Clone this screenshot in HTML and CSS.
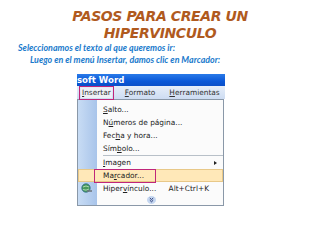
FILE: index.html
```html
<!DOCTYPE html>
<html>
<head>
<meta charset="utf-8">
<link rel="stylesheet" href="styles.css">
</head>
<body>
<h1 class="title">PASOS PARA CREAR UN<br>HIPERVINCULO</h1>
<p class="step step1">Seleccionamos el texto al que queremos ir:</p>
<p class="step step2">Luego en el menú Insertar, damos clic en Marcador:</p>
<div class="shot">
  <div class="titlebar">soft Word</div>
  <div class="menubar">
    <span class="mitem active"><u>I</u>nsertar</span>
    <span class="mitem"><u>F</u>ormato</span>
    <span class="mitem"><u>H</u>erramientas</span>
  </div>
  <div class="dropdown">
    <div class="row"><span class="label"><u>S</u>alto...</span></div>
    <div class="row"><span class="label">N<u>ú</u>meros de página...</span></div>
    <div class="row"><span class="label">Fec<u>h</u>a y hora...</span></div>
    <div class="row"><span class="label">Sím<u>b</u>olo...</span></div>
    <div class="sep"></div>
    <div class="row"><span class="label"><u>I</u>magen</span><span class="arrow"></span></div>
    <div class="row hl"><span class="label boxed">Ma<u>r</u>cador...</span></div>
    <div class="row">
      <span class="icon"><svg width="12" height="11" viewBox="0 0 12 11"><circle cx="5" cy="5" r="4.2" fill="#4a9a5a" stroke="#2c6a8a" stroke-width="0.8"/><path d="M2 4 Q5 2 8 4 M2 6.5 Q5 8 8 6" stroke="#bfe6c8" stroke-width="0.8" fill="none"/><path d="M6 8 h5" stroke="#707880" stroke-width="1.6"/></svg></span>
      <span class="label">Hiper<u>v</u>ínculo...</span><span class="key">Alt+Ctrl+K</span>
    </div>
    <div class="more"><span class="chev"><svg width="9" height="8" viewBox="0 0 9 8"><ellipse cx="4.5" cy="4" rx="4.5" ry="4" fill="#c4d6f0"/><path d="M2.8 2 L4.5 3.6 L6.2 2 M2.8 4.2 L4.5 5.8 L6.2 4.2" stroke="#1a2a6a" stroke-width="0.9" fill="none"/></svg></span></div>
  </div>
</div>
</body>
</html>
```
FILE: styles.css
```css
html, body {
  margin: 0;
  padding: 0;
  background: #fff;
  width: 320px;
  height: 240px;
  overflow: hidden;
}
.title {
  margin: 0;
  padding-top: 8px;
  font-family: "DejaVu Sans", sans-serif;
  font-style: italic;
  font-weight: bold;
  font-size: 14px;
  line-height: 17px;
  color: #b05a1e;
  text-align: center;
  letter-spacing: -0.4px;
}
.step {
  margin: 0;
  font-family: Lato, sans-serif;
  font-weight: bold;
  font-style: italic;
  font-size: 8.9px;
  line-height: 12px;
  color: #1a7acc;
}
.step1 { padding-left: 18px; margin-top: 0; }
.step2 { padding-left: 30px; }
.shot {
  margin-left: 77px;
  margin-top: 8px;
  width: 148px;
  font-family: "DejaVu Sans", sans-serif;
  font-size: 7.4px;
  color: #222;
}
.titlebar {
  height: 12px;
  line-height: 12px;
  background: linear-gradient(#2a7ae8, #0a58d8 60%, #0a4fc8);
  color: #fff;
  font-weight: bold;
  font-size: 8.6px;
  font-family: "DejaVu Sans", sans-serif;
  overflow: hidden;
}
.menubar {
  height: 13px;
  background: linear-gradient(#e6eef9, #cddcf2);
  display: flex;
  align-items: center;
  gap: 12px;
  padding-left: 4px;
  color: #333;
}
.mitem { line-height: 10px; padding: 0 1px; }
.mitem.active {
  outline: 1.5px solid #c0267a;
  outline-offset: 1px;
  background: #eef0f6;
}
.dropdown {
  width: 145px;
  border: 1px solid #8a98a8;
  background: linear-gradient(90deg, #c8dcf4 0, #a8c4ea 19px, #fbfbfb 19px);
  padding-top: 3px;
}
.row {
  height: 13px;
  display: flex;
  align-items: center;
  position: relative;
  padding-left: 25px;
}
.row .label { flex: 0 0 auto; }
.row .key { margin-left: auto; margin-right: 14px; }
.row .icon { position: absolute; left: 3px; top: 1px; }
.arrow {
  margin-left: auto;
  margin-right: 6px;
  width: 0;
  height: 0;
  border-left: 3px solid #222;
  border-top: 2.5px solid transparent;
  border-bottom: 2.5px solid transparent;
}
.sep {
  height: 1px;
  margin: 0 0 0 25px;
  background: #b8c0c8;
}
.row.hl {
  background: #ffe8b8;
  box-shadow: inset 0 0 0 1px #e8c888;
}
.boxed {
  outline: 1.5px solid #c0267a;
  outline-offset: 1px;
  margin-left: -7px;
  padding: 0 10px 0 7px;
  line-height: 10px;
}
.more {
  height: 10px;
  display: flex;
  align-items: center;
  padding-left: 69px;
}
.chev { display: block; height: 8px; }
.chev svg { display: block; }
```
